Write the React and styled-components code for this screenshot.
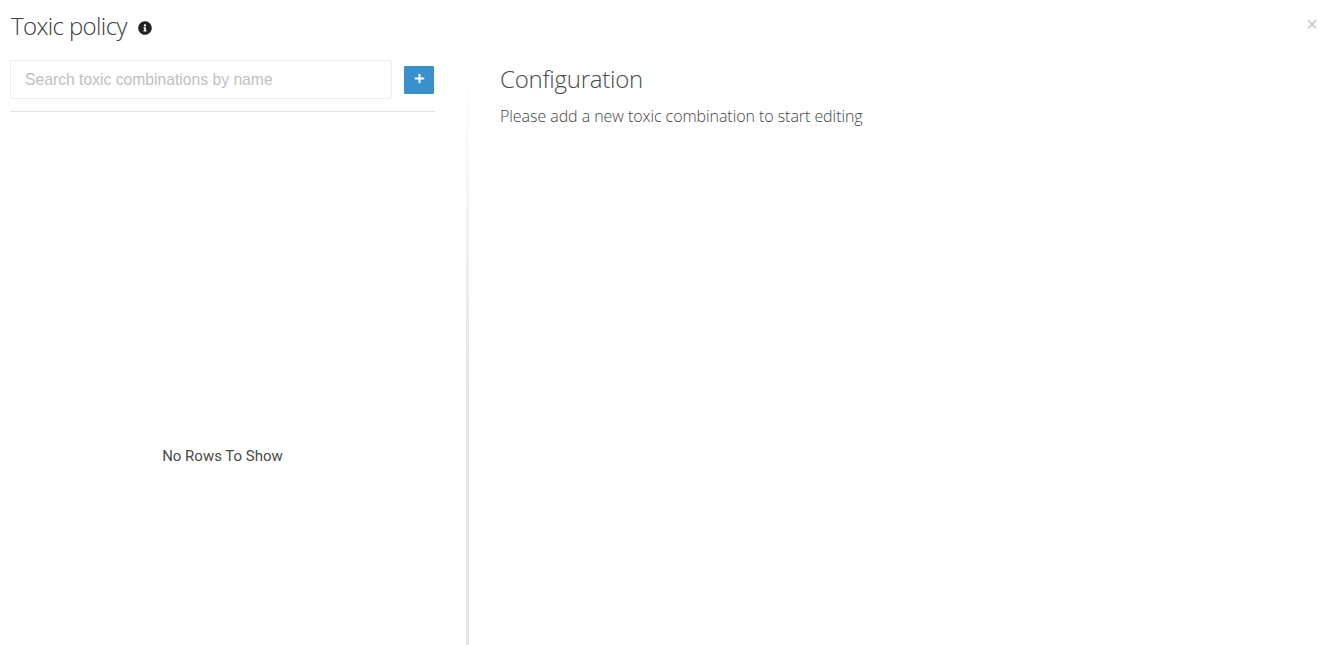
import React from "react";
import styled, { createGlobalStyle } from "styled-components";
import { FaInfoCircle, FaPlus } from "react-icons/fa";

const GlobalStyle = createGlobalStyle`
  html, body {
    margin: 0;
    height: 100%;
    background: #fff;
    overflow: hidden;
  }
  #root {
    height: 100%;
  }
`;

const Modal = styled.div`
  position: relative;
  display: flex;
  flex-direction: column;
  height: 645px;
  box-sizing: border-box;
  font-family: "Open Sans", "Liberation Sans", sans-serif;
`;

const Header = styled.header`
  display: flex;
  align-items: center;
  height: 52px;
  padding-left: 11px;
  flex-shrink: 0;
`;

const Title = styled.h1`
  margin: 0 0 2px;
  font-size: 24px;
  font-weight: 300;
  letter-spacing: -0.62px;
  color: #3c3c3c;
`;

const InfoIcon = styled(FaInfoCircle)`
  width: 14px;
  height: 14px;
  margin-left: 11px;
  margin-top: 4px;
  color: #222;
`;

const CloseButton = styled.button`
  position: absolute;
  top: 12px;
  right: 9px;
  padding: 0;
  border: 0;
  background: none;
  font-family: "Liberation Sans", sans-serif;
  font-size: 20px;
  line-height: 24px;
  color: #c4c4c4;
`;

const Body = styled.div`
  display: flex;
  flex: 1;
  min-height: 0;
`;

const Sidebar = styled.aside`
  display: flex;
  flex-direction: column;
  width: 425px;
  margin-left: 10px;
  margin-top: 8px;
`;

const SearchRow = styled.div`
  display: flex;
  align-items: center;
  justify-content: space-between;
  padding-bottom: 12px;
  border-bottom: 1px solid #e2e2e2;
`;

const SearchInput = styled.input`
  width: 382px;
  height: 39px;
  box-sizing: border-box;
  padding: 0 14px;
  border: 1px solid #eee;
  border-radius: 2px;
  outline: none;
  font-family: "Liberation Sans", sans-serif;
  font-size: 15.7px;
  color: #333;

  &::placeholder {
    color: #c0c0c0;
    opacity: 1;
  }
`;

const AddButton = styled.button`
  display: flex;
  align-items: center;
  justify-content: center;
  width: 30px;
  height: 28px;
  margin-right: 1px;
  padding: 0 0 3px;
  border: 0;
  border-radius: 1px;
  background: #3a8fcd;
  color: #fff;
`;

const EmptyRows = styled.div`
  flex: 1;
  display: flex;
  align-items: center;
  justify-content: center;
  padding-top: 154px;
  font-family: Roboto, "Liberation Sans", sans-serif;
  font-size: 15px;
  color: #4a4a4a;
`;

const Divider = styled.div`
  width: 3px;
  margin-left: 31px;
  margin-top: 22px;
  background: linear-gradient(to bottom, #fff 0%, #e4e4e4 55%, #e4e4e4 100%);
`;

const Config = styled.section`
  flex: 1;
  padding: 11px 0 0 31px;
`;

const ConfigTitle = styled.h2`
  margin: 0;
  font-size: 24px;
  line-height: 32px;
  font-weight: 300;
  letter-spacing: -0.25px;
  color: #4a4a4a;
`;

const ConfigHint = styled.p`
  margin: 11px 0 0;
  font-size: 16px;
  line-height: 20px;
  font-weight: 300;
  letter-spacing: -0.06px;
  color: #444;
`;

export default function App() {
  return (
    <>
      <GlobalStyle />
      <Modal>
        <Header>
          <Title>Toxic policy</Title>
          <InfoIcon />
        </Header>
        <CloseButton>×</CloseButton>
        <Body>
          <Sidebar>
            <SearchRow>
              <SearchInput placeholder="Search toxic combinations by name" />
              <AddButton>
                <FaPlus size={11} />
              </AddButton>
            </SearchRow>
            <EmptyRows>No Rows To Show</EmptyRows>
          </Sidebar>
          <Divider />
          <Config>
            <ConfigTitle>Configuration</ConfigTitle>
            <ConfigHint>Please add a new toxic combination to start editing</ConfigHint>
          </Config>
        </Body>
      </Modal>
    </>
  );
}
